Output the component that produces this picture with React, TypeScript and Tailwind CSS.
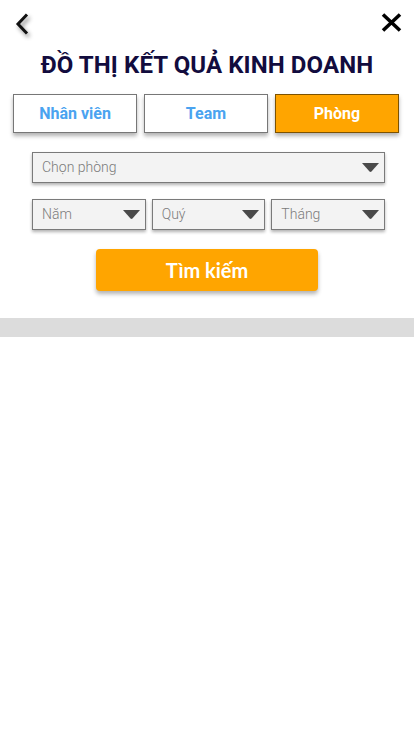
import React, { useState } from 'react';

const TABS = ['Nhân viên', 'Team', 'Phòng'];

const Caret = () => (
    <svg width="17" height="9" viewBox="0 0 17 9" className="shrink-0">
        <path d="M0 0 L17 0 L9.5 8.5 Q8.5 9.4 7.5 8.5 Z" fill="#4a4a4a" />
    </svg>
);

const Select = ({ label, className }: { label: string; className?: string }) => (
    <div className={`h-[31px] bg-[#f3f3f3] border border-[#7a7a7a] shadow-[0_2px_3px_rgba(0,0,0,0.3)] flex items-center justify-between pl-[9px] pr-[5px] ${className ?? ''}`}>
        <span className="text-[14px] font-light text-[#7b7b7b]">{label}</span>
        <Caret />
    </div>
);

export default function App() {
    const [tab, setTab] = useState(2);

    return (
        <div className="w-[414px] h-[736px] bg-white font-['Roboto',sans-serif] flex flex-col">
            {/* Header */}
            <div className="flex items-start justify-between pl-[15px] pr-[12px] pt-[13px] h-[44px]">
                <svg width="14" height="22" viewBox="0 0 14 22" className="drop-shadow-[2px_3px_2px_rgba(0,0,0,0.45)]">
                    <path d="M12 1.5 L3 11 L12 20.5" stroke="#111" strokeWidth="3" fill="none" strokeLinejoin="miter" />
                </svg>
                <svg width="21" height="19" viewBox="0 0 21 19">
                    <path d="M2 1.5 L19 17.5 M19 1.5 L2 17.5" stroke="#000" strokeWidth="3.6" />
                </svg>
            </div>

            <h1 className="text-center text-[24px] font-bold text-[#120c3e] leading-[28px] mt-[7px] tracking-[0.1px]">
                ĐỒ THỊ KẾT QUẢ KINH DOANH
            </h1>

            {/* Tabs */}
            <div className="flex gap-[7px] pl-[13px] pr-[15px] mt-[15px]">
                {TABS.map((t, i) => (
                    <button
                        key={t}
                        onClick={() => setTab(i)}
                        className={`flex-1 h-[39px] border text-[16px] font-bold shadow-[0_3px_4px_rgba(0,0,0,0.3)] ${tab === i ? 'bg-[#ffa500] border-[#7d5200] text-white' : 'bg-white border-[#777] text-[#4aa3f0]'}`}
                    >
                        {t}
                    </button>
                ))}
            </div>

            {/* Filters */}
            <div className="pl-[32px] pr-[29px] mt-[19px] flex flex-col gap-[16px]">
                <Select label="Chọn phòng" />
                <div className="flex gap-[6px]">
                    <Select label="Năm" className="flex-1" />
                    <Select label="Quý" className="flex-1" />
                    <Select label="Tháng" className="flex-1" />
                </div>
            </div>

            <div className="flex justify-center mt-[19px]">
                <button className="w-[222px] h-[42px] rounded-[4px] bg-[#ffa500] text-white text-[20px] font-bold font-['Lato',sans-serif] shadow-[0_3px_4px_rgba(0,0,0,0.3)]">
                    Tìm kiếm
                </button>
            </div>

            <div className="mt-[27px] h-[19px] bg-[#dcdcdc]" />
        </div>
    );
}
